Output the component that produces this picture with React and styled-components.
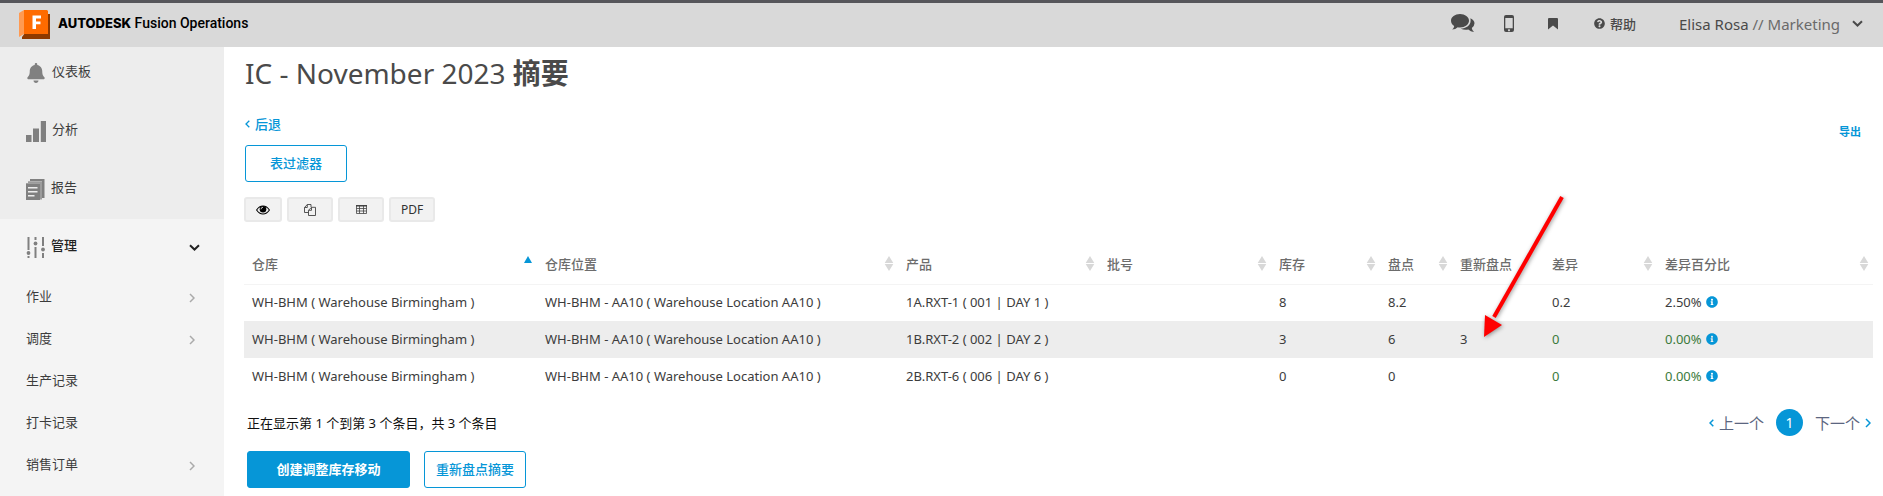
import React from "react";
import styled, { createGlobalStyle, css } from "styled-components";
import { FaBell, FaQuestionCircle, FaInfoCircle } from "react-icons/fa";

const blue = "#0696d7";

const Global = createGlobalStyle`
  *, *::before, *::after { box-sizing: border-box; }
  body {
    margin: 0;
    background: #fff;
    color: #3c3c3c;
    font-family: "Noto Sans", "Noto Sans CJK SC", sans-serif;
    font-size: 13px;
    line-height: 20px;
  }
  button, a { font-family: inherit; }
  a { color: inherit; text-decoration: none; }
`;

const Page = styled.div`
  display: flex;
  flex-direction: column;
  min-height: 100vh;
`;

const TopBar = styled.header`
  display: flex;
  align-items: center;
  justify-content: space-between;
  height: 47px;
  padding: 0 20px 3px 19px;
  background: #d9d9d9;
  border-top: 3px solid #56565b;
`;

const Brand = styled.a`
  display: flex;
  align-items: center;
  gap: 7px;
  color: #000;
  font-family: Roboto, sans-serif;
  font-size: 14px;
  font-weight: 500;
  svg { margin-top: 2px; }
  span { padding-bottom: 2px; }
  strong {
    font-family: Inter, sans-serif;
    font-size: 13px;
    font-weight: 800;
  }
`;

const Tools = styled.div`
  display: flex;
  align-items: center;
  color: #4a4a4a;
`;

const ToolButton = styled.button`
  display: flex;
  align-items: center;
  gap: ${(p) => (p.$user ? 12 : 5)}px;
  padding: 0;
  border: 0;
  background: none;
  color: inherit;
  font-size: ${(p) => (p.$user ? 15 : 13)}px;
  line-height: 20px;
  font-weight: ${(p) => (p.$strong ? 500 : 400)};
  margin-left: ${(p) => p.$gap || 0}px;
  cursor: pointer;
`;

const Team = styled.span`
  color: #6a6a6a;
`;

const Body = styled.div`
  display: flex;
  flex: 1;
`;

const Sidebar = styled.nav`
  flex: 0 0 224px;
  background: #f4f4f4;
  color: #3c3c3c;
`;

const MainLinks = styled.div`
  display: flex;
  flex-direction: column;
  gap: 6px;
  padding-bottom: 4px;
  background: #ededed;
`;

const NavLink = styled.a`
  display: flex;
  align-items: center;
  gap: 6px;
  height: 52px;
  padding: 0 26px;
  svg { flex: none; }
  span { flex: 1; padding-bottom: 4px; }
`;

const SectionLink = styled(NavLink)`
  height: 56px;
  padding-right: 24px;
  color: #222;
  font-weight: 500;
`;

const SubLink = styled(NavLink)`
  height: 42px;
  padding: 4px 29px 0 26px;
`;

const Content = styled.main`
  flex: 1;
  min-width: 0;
  padding: 8px 10px 8px 20px;
`;

const Title = styled.h1`
  margin: 0 0 23px;
  color: #4a4a4a;
  font-size: 28px;
  line-height: 36px;
  font-weight: 400;
  strong { font-weight: 700; }
`;

const BackLink = styled.a`
  display: inline-flex;
  align-items: center;
  gap: 5px;
  color: ${blue};
  font-weight: 500;
`;

const Row = styled.div`
  display: flex;
  align-items: flex-start;
  justify-content: space-between;
  height: 31px;
`;

const ExportLink = styled.a`
  padding: 10px 12px 0;
  color: ${blue};
  font-size: 11px;
  line-height: 16px;
  font-weight: 700;
`;

const ActionButton = styled.button`
  height: 37px;
  min-width: ${(p) => (p.$wide ? 163 : 102)}px;
  padding: 0 11px 2px;
  border: 1px solid ${blue};
  border-radius: 3px;
  background: ${(p) => (p.$wide ? blue : "#fff")};
  color: ${(p) => (p.$wide ? "#fff" : blue)};
  font-size: 13px;
  font-weight: ${(p) => (p.$wide ? 700 : 500)};
  cursor: pointer;
`;

const Filters = styled.div`
  padding-left: 1px;
`;

const ExportTools = styled.div`
  display: flex;
  gap: 5px;
  margin-top: 15px;
`;

const SmallButton = styled.button`
  display: flex;
  align-items: center;
  justify-content: center;
  width: ${(p) => (p.$narrow ? 38 : 46)}px;
  height: 25px;
  padding: 0;
  border: 2px solid #e9e9e9;
  border-radius: 3px;
  background: #f2f2f2;
  color: ${(p) => (p.$narrow ? "#000" : "#333")};
  font-size: 12px;
  cursor: pointer;
`;

const Table = styled.table`
  width: 100%;
  margin-top: 19px;
  border-collapse: collapse;
  table-layout: fixed;
`;

const HeadCell = styled.th`
  height: 43px;
  padding: 3px 1px 0 8px;
  border-bottom: 1px solid #f4f4f4;
  color: #6c6c6c;
  font-size: 13px;
  font-weight: 500;
  text-align: left;
`;

const HeadInner = styled.span`
  display: flex;
  align-items: center;
  justify-content: space-between;
`;

const BodyRow = styled.tr`
  &:nth-child(even) { background: #ededed; }
`;

const Cell = styled.td`
  position: relative;
  height: 37px;
  padding: 0 8px 2px;
  white-space: nowrap;
  ${(p) => p.$good && css`color: #3b7a3b;`}
`;

const Percent = styled.span`
  display: flex;
  align-items: center;
  gap: 4px;
  svg { color: ${blue}; }
`;

const Pointer = styled.svg`
  position: absolute;
  left: 26px;
  bottom: 19px;
  z-index: 1;
  pointer-events: none;
  filter: drop-shadow(1px 1px 2px rgba(0, 0, 0, 0.4));
`;

const Footer = styled.div`
  display: flex;
  align-items: center;
  justify-content: space-between;
  margin-top: 14px;
  padding: 0 2px 0 3px;
  color: #111;
`;

const Pager = styled.nav`
  display: flex;
  align-items: center;
  gap: 12px;
`;

const PageLink = styled.a`
  display: flex;
  align-items: center;
  gap: 5px;
  color: #5c6680;
  font-size: 15px;
  svg { color: ${blue}; }
`;

const CurrentPage = styled.a`
  width: 27px;
  height: 27px;
  border-radius: 50%;
  background: ${blue};
  color: #fff;
  font-size: 14px;
  line-height: 27px;
  text-align: center;
`;

const Actions = styled.div`
  display: flex;
  gap: 14px;
  margin-top: 15px;
  padding-left: 3px;
`;

const chevrons = {
  left: { w: 5, h: 8, d: "M4.300 .7 1 4 4.300 7.300" },
  right: { w: 6, h: 10, d: "M1 1 5 5 1 9" },
  down: { w: 11, h: 7, d: "M1 1.200 5.500 5.500 10 1.200" },
};

const Chevron = ({ dir, weight = 1.5, color = "currentColor" }) => {
  const c = chevrons[dir];
  return (
    <svg width={c.w} height={c.h} viewBox={`0 0 ${c.w} ${c.h}`} aria-hidden="true">
      <path d={c.d} fill="none" stroke={color} strokeWidth={weight} />
    </svg>
  );
};

const Logo = () => (
  <svg width="32" height="30" viewBox="0 0 32 30" aria-hidden="true">
    <path d="M0 3 5 0V24L0 27Z" fill="#ff9a52" />
    <path d="M28 4H31V29H3V27L6 23Z" fill="#8f3a00" />
    <path d="M5 0H28L29 1V24H5Z" fill="#ff6b00" />
    <path d="M13.500 5.500H22V8.500H17V11.500H21.500V14.200H17V19H13.500Z" fill="#fff" />
  </svg>
);

const Chat = () => (
  <svg width="24" height="19" viewBox="0 0 24 19" fill="currentColor" aria-hidden="true">
    <path d="M9 0C14 0 18 3 18 6.700S14 13.400 9 13.400Q7.800 13.400 6.700 13.200Q4.500 15.300 1.200 15.600Q3 14 3.200 12C1.200 10.800 0 8.900 0 6.700C0 3 4 0 9 0Z" />
    <path d="M19.400 4.200C22 5.300 23.500 7.200 23.500 9.300Q23.500 12 20.800 13.900Q21 16.200 23 18Q19.500 17.800 17.300 15.600Q12.800 16.300 9.600 14.600C15 14.500 19.600 11.300 19.600 6.700Q19.600 5.300 19.400 4.200Z" />
  </svg>
);

const Bookmark = () => (
  <svg width="10" height="12" viewBox="0 0 10 12" fill="currentColor" aria-hidden="true">
    <path d="M0 1Q0 0 1 0H9Q10 0 10 1V11.500L5 7.500 0 11.500Z" />
  </svg>
);

const Phone = () => (
  <svg width="10" height="17" viewBox="0 0 10 17" aria-hidden="true">
    <path fillRule="evenodd" fill="#4a4a4a" d="M2 0H8Q10 0 10 2V15Q10 17 8 17H2Q0 17 0 15V2Q0 0 2 0ZM1.300 3V13.200H8.700V3ZM5 14.200a1 1 0 1 0 .01 0Z" />
  </svg>
);

const Bars = () => (
  <svg width="20" height="21" viewBox="0 0 20 21" fill="#808080" aria-hidden="true">
    <path d="M0 14h5.500v7H0zM7 7.500h6v13.500H7zM14.800 0h5.200v21h-5.200z" />
  </svg>
);

const Report = () => (
  <svg width="19" height="21" viewBox="0 0 19 21" fill="#808080" aria-hidden="true">
    <path d="M4 0H18.500V19H16V2H4Z" />
    <path d="M2 2.300H16V20.500H14V4H2Z" opacity=".75" />
    <path d="M0 4.300H14V21H0Z" />
    <path d="M2 8.700h9.500M2 12.700h9.500M2 16.700h6.500" stroke="#ededed" strokeWidth="1.400" />
  </svg>
);

const Sliders = () => (
  <svg width="19" height="21" viewBox="0 0 19 21" fill="#808080" aria-hidden="true">
    <path d="M1.500 0h2v13h-2zM1.500 19h2v2h-2zM8.500 0h2v3h-2zM8.500 10h2v11h-2zM16 0h2v9h-2zM16 16h2v5h-2z" />
    <circle cx="2.500" cy="16" r="1.900" />
    <circle cx="9.500" cy="6.500" r="1.900" />
    <circle cx="17" cy="12.500" r="1.900" />
  </svg>
);

const Eye = () => (
  <svg width="14" height="10" viewBox="0 0 14 10" aria-hidden="true">
    <path d="M.6 5Q3.200 1 7 1T13.400 5Q10.800 9 7 9T.6 5Z" fill="none" stroke="#000" strokeWidth="1.100" />
    <circle cx="7" cy="4.300" r="3.300" />
    <path d="M5 4.300Q5 2.300 7 2.300" fill="none" stroke="#f2f2f2" strokeWidth=".8" />
  </svg>
);

const Files = () => (
  <svg width="12" height="12" viewBox="0 0 12 12" fill="none" stroke="#444" strokeWidth=".9" aria-hidden="true">
    <path d="M4.500 8.500H.5V3.500L3.300.5H7V3M3.300.5V3.500H.5" />
    <path d="M4.500 6.300 7.500 3.300H11.500V11.500H4.500ZM7.500 3.300V6.300H4.500" />
  </svg>
);

const GridIcon = () => (
  <svg width="11" height="9" viewBox="0 0 11 9" aria-hidden="true">
    <path d="M.5.5h10v8H.5ZM.5 3.500h10M.5 6h10M3.500 1v7.500M7.500 1v7.500" fill="none" stroke="#444" strokeWidth=".8" />
    <path d="M0 0h11v1.500H0z" fill="#444" />
  </svg>
);

const SortMark = ({ active }) => (
  <svg width="16" height="15" viewBox="0 0 16 15" aria-hidden="true">
    {active ? (
      <path d="M8 0 12 7H4Z" fill={blue} />
    ) : (
      <path d="M8 0 12.300 7H3.700ZM8 15 12.300 8H3.700Z" fill="#d8d8d8" />
    )}
  </svg>
);

const columns = [
  { name: "仓库", width: 293, sort: "asc" },
  { name: "仓库位置", width: 361, sort: "both" },
  { name: "产品", width: 201, sort: "both" },
  { name: "批号", width: 172, sort: "both" },
  { name: "库存", width: 109, sort: "both" },
  { name: "盘点", width: 72, sort: "both" },
  { name: "重新盘点", width: 92 },
  { name: "差异", width: 113, sort: "both" },
  { name: "差异百分比", width: 216, sort: "both" },
];

const rows = [
  { product: "1A.RXT-1 ( 001 | DAY 1 )", stock: "8", count: "8.2", recount: "", diff: "0.2", pct: "2.50%" },
  { product: "1B.RXT-2 ( 002 | DAY 2 )", stock: "3", count: "6", recount: "3", diff: "0", pct: "0.00%" },
  { product: "2B.RXT-6 ( 006 | DAY 6 )", stock: "0", count: "0", recount: "", diff: "0", pct: "0.00%" },
];

const subLinks = [
  { name: "作业", more: true },
  { name: "调度", more: true },
  { name: "生产记录" },
  { name: "打卡记录" },
  { name: "销售订单", more: true },
];

export default function App() {
  return (
    <Page>
      <Global />
      <TopBar>
        <Brand href="#home">
          <Logo />
          <span><strong>AUTODESK</strong> Fusion Operations</span>
        </Brand>
        <Tools>
          <ToolButton aria-label="消息"><Chat /></ToolButton>
          <ToolButton aria-label="手机" $gap={29}><Phone /></ToolButton>
          <ToolButton aria-label="书签" $gap={34}><Bookmark /></ToolButton>
          <ToolButton $gap={36} $strong><FaQuestionCircle size={11} />帮助</ToolButton>
          <ToolButton $gap={43} $user>
            <span>Elisa Rosa <Team>// Marketing</Team></span>
            <Chevron dir="down" weight={2} />
          </ToolButton>
        </Tools>
      </TopBar>
      <Body>
        <Sidebar>
          <MainLinks>
            <NavLink href="#dashboard"><FaBell size={20} color="#808080" /><span>仪表板</span></NavLink>
            <NavLink href="#analytics"><Bars /><span>分析</span></NavLink>
            <NavLink href="#reports"><Report /><span>报告</span></NavLink>
          </MainLinks>
          <SectionLink href="#management">
            <Sliders /><span>管理</span><Chevron dir="down" weight={2} />
          </SectionLink>
          {subLinks.map((l) => (
            <SubLink key={l.name} href="#sub">
              <span>{l.name}</span>
              {l.more && <Chevron dir="right" color="#aaa" />}
            </SubLink>
          ))}
        </Sidebar>
        <Content>
          <Filters>
            <Title>IC - November 2023 <strong>摘要</strong></Title>
            <Row>
              <BackLink href="#back"><Chevron dir="left" weight={1.3} />后退</BackLink>
              <ExportLink href="#export">导出</ExportLink>
            </Row>
            <ActionButton>表过滤器</ActionButton>
          </Filters>
          <ExportTools>
            <SmallButton $narrow aria-label="显示列"><Eye /></SmallButton>
            <SmallButton aria-label="复制"><Files /></SmallButton>
            <SmallButton aria-label="表格"><GridIcon /></SmallButton>
            <SmallButton>PDF</SmallButton>
          </ExportTools>
          <Table>
            <colgroup>
              {columns.map((c) => <col key={c.name} width={c.width} />)}
            </colgroup>
            <thead>
              <tr>
                {columns.map((c) => (
                  <HeadCell key={c.name} scope="col">
                    <HeadInner>{c.name}{c.sort && <SortMark active={c.sort === "asc"} />}</HeadInner>
                  </HeadCell>
                ))}
              </tr>
            </thead>
            <tbody>
              {rows.map((r) => (
                <BodyRow key={r.product}>
                  <Cell>WH-BHM ( Warehouse Birmingham )</Cell>
                  <Cell>WH-BHM - AA10 ( Warehouse Location AA10 )</Cell>
                  <Cell>{r.product}</Cell>
                  <Cell />
                  <Cell>{r.stock}</Cell>
                  <Cell>{r.count}</Cell>
                  <Cell>
                    {r.recount}
                    {r.recount && (
                      <Pointer width="90" height="146" viewBox="0 0 90 146" aria-hidden="true">
                        <path d="M84 4 16 124" stroke="#f00" strokeWidth="4" />
                        <path d="M6 144 7 122 24 132Z" fill="#f00" />
                      </Pointer>
                    )}
                  </Cell>
                  <Cell $good={r.diff === "0"}>{r.diff}</Cell>
                  <Cell $good={r.diff === "0"}>
                    <Percent>{r.pct}<FaInfoCircle size={12} /></Percent>
                  </Cell>
                </BodyRow>
              ))}
            </tbody>
          </Table>
          <Footer>
            <span>正在显示第 1 个到第 3 个条目，共 3 个条目</span>
            <Pager aria-label="分页">
              <PageLink href="#prev"><Chevron dir="left" />上一个</PageLink>
              <CurrentPage href="#1" aria-current="page">1</CurrentPage>
              <PageLink href="#next">下一个<Chevron dir="right" /></PageLink>
            </Pager>
          </Footer>
          <Actions>
            <ActionButton $wide>创建调整库存移动</ActionButton>
            <ActionButton>重新盘点摘要</ActionButton>
          </Actions>
        </Content>
      </Body>
    </Page>
  );
}
